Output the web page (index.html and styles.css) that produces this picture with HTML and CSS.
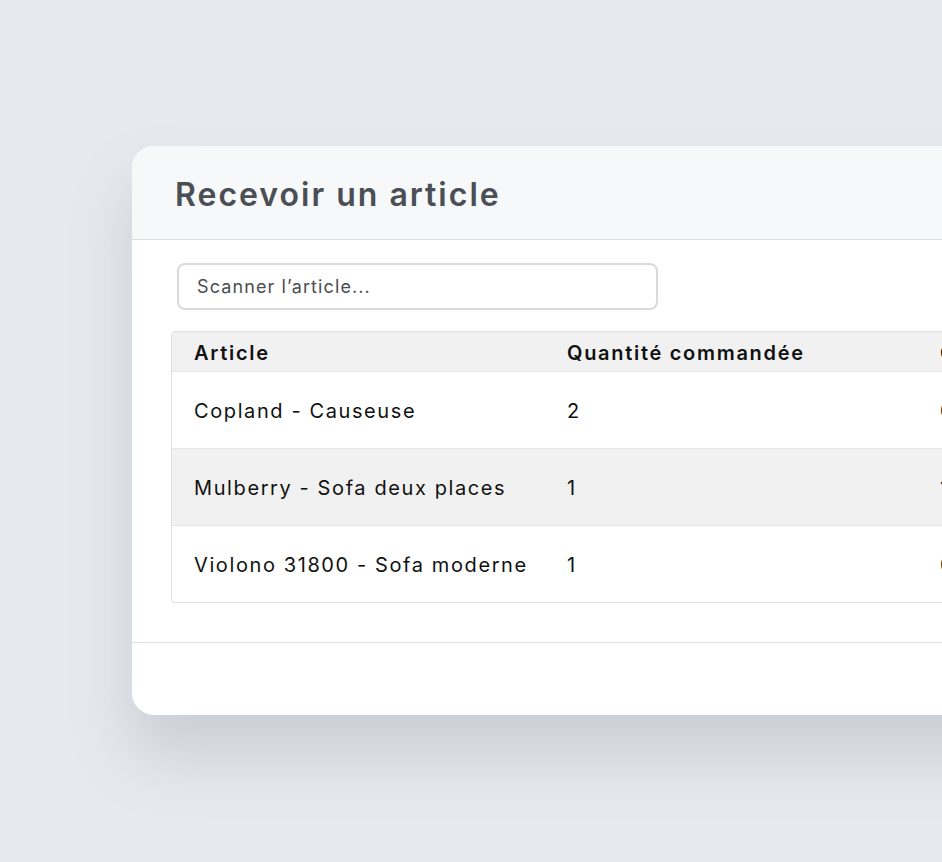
FILE: index.html
```html
<!DOCTYPE html>
<html lang="fr">
<head>
<meta charset="utf-8">
<title>Recevoir un article</title>
<link rel="stylesheet" href="styles.css">
</head>
<body>
<div class="stage">
  <div class="card">
    <div class="card-header">
      <h1 class="title">Recevoir un article</h1>
    </div>
    <div class="card-body">
      <input class="scan" type="text" placeholder="Scanner l’article...">
      <div class="table">
        <div class="row head">
          <div class="cell">Article</div>
          <div class="cell">Quantité commandée</div>
          <div class="cell">Quantité reçue</div>
        </div>
        <div class="row">
          <div class="cell">Copland - Causeuse</div>
          <div class="cell">2</div>
          <div class="cell">0</div>
        </div>
        <div class="row alt">
          <div class="cell">Mulberry - Sofa deux places</div>
          <div class="cell">1</div>
          <div class="cell">1</div>
        </div>
        <div class="row">
          <div class="cell">Violono 31800 - Sofa moderne</div>
          <div class="cell">1</div>
          <div class="cell">0</div>
        </div>
      </div>
    </div>
    <div class="card-footer"></div>
  </div>
</div>
</body>
</html>
```

FILE: styles.css
```css
html, body {
  margin: 0;
  padding: 0;
}
body {
  background: #e6e9ef;
  font-family: "Inter", "Noto Sans", sans-serif;
  width: 942px;
  height: 862px;
  overflow: hidden;
}
.stage {
  padding: 146px 0 0 132px;
}
.card {
  width: 960px;
  background: #ffffff;
  border-radius: 22px;
  box-shadow: 0 40px 60px rgba(125, 130, 140, 0.26);
  overflow: hidden;
}
.card-header {
  background: #f7f8f9;
  height: 93px;
  border-bottom: 1px solid #dcdde0;
  display: flex;
  align-items: center;
  padding-left: 43px;
}
.title {
  margin: 3px 0 0 0;
  font-size: 32px;
  font-weight: 600;
  color: #4a4f55;
  letter-spacing: 2px;
}
.card-body {
  padding: 23px 0 39px 39px;
  border-bottom: 1px solid #e0e0e6;
}
.scan {
  display: block;
  margin-left: 6px;
  width: 481px;
  height: 47px;
  box-sizing: border-box;
  border: 2px solid #d9dadc;
  border-radius: 8px;
  padding: 0 18px;
  font-family: inherit;
  font-size: 18px;
  letter-spacing: 1.1px;
  color: #333;
  outline: none;
}
.scan::placeholder {
  color: #4a4d51;
}
.table {
  margin-top: 21px;
  border: 1px solid #dedfe2;
  border-right: none;
  border-radius: 4px 0 0 4px;
}
.row {
  display: grid;
  grid-template-columns: 373px 373px 1fr;
  height: 76px;
  align-items: center;
  border-top: 1px solid #e4e5e8;
  font-size: 20px;
  letter-spacing: 1.6px;
  color: #111;
}
.row.head {
  height: 39px;
  border-top: none;
  background: #f1f1f1;
  font-weight: 600;
  letter-spacing: 1.7px;
}
.row.alt {
  background: #f1f1f1;
}
.cell {
  padding-left: 22px;
  padding-top: 2px;
  white-space: nowrap;
}
.card-footer {
  height: 72px;
}
```
